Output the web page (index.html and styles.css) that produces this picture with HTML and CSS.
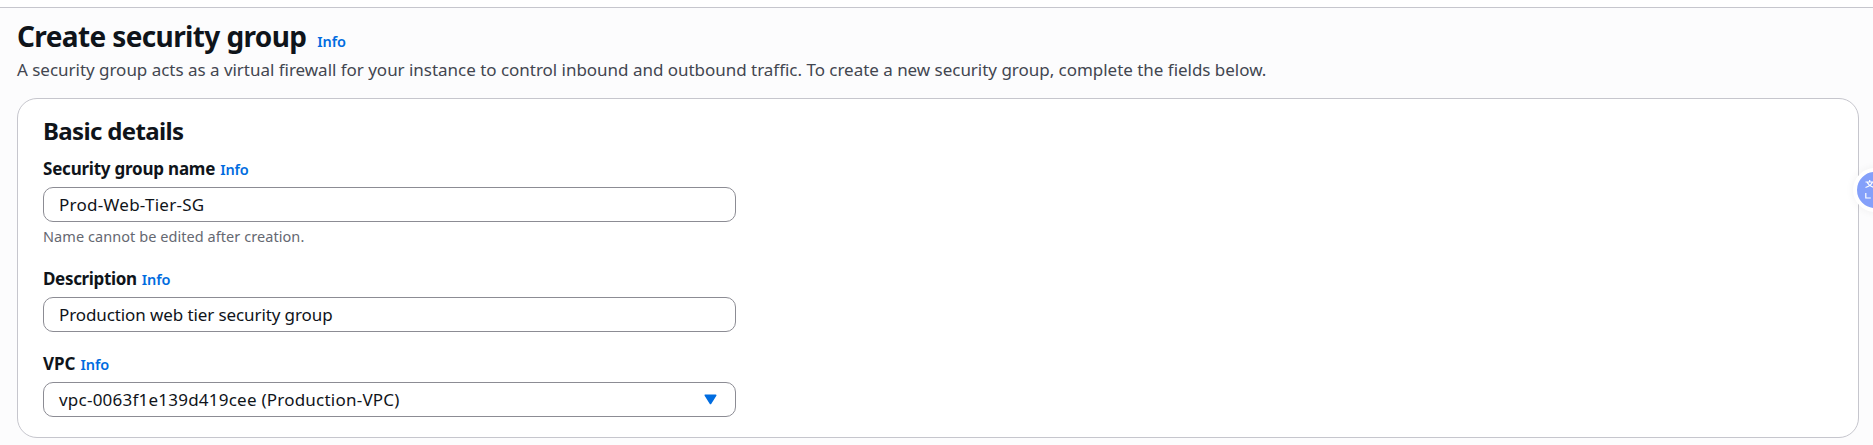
FILE: index.html
```html
<!DOCTYPE html>
<html lang="en">
<head>
<meta charset="utf-8">
<title>Create security group</title>
<link rel="stylesheet" href="styles.css">
</head>
<body>
<div class="topbar"></div>
<main class="page">
  <header class="page-header">
    <h1 class="page-title">Create security group</h1>
    <a class="info">Info</a>
  </header>
  <p class="page-description">A security group acts as a virtual firewall for your instance to control inbound and outbound traffic. To create a new security group, complete the fields below.</p>
  <section class="card">
    <h2 class="card-title">Basic details</h2>
    <div class="field">
      <div class="label-row"><span class="label label-name">Security group name</span><a class="info">Info</a></div>
      <div class="control"><span class="value-name">Prod-Web-Tier-SG</span></div>
      <div class="hint">Name cannot be edited after creation.</div>
    </div>
    <div class="field">
      <div class="label-row"><span class="label label-description">Description</span><a class="info">Info</a></div>
      <div class="control"><span class="value-description">Production web tier security group</span></div>
    </div>
    <div class="field">
      <div class="label-row"><span class="label label-vpc">VPC</span><a class="info">Info</a></div>
      <div class="control select"><span class="value-vpc">vpc-0063f1e139d419cee (Production-VPC)</span>
        <svg class="caret" width="13" height="11" viewBox="0 0 13 11"><path d="M1.300 1.300h10.400L6.500 9.500z" fill="#006ce0" stroke="#006ce0" stroke-width="1.600" stroke-linejoin="round"/></svg>
      </div>
    </div>
  </section>
</main>
<div class="translate">
  <svg width="18" height="20" viewBox="0 0 18 20" fill="none" stroke="#fff" stroke-width="1.200"><path d="M.5 2H9M4.700 0V2M2 2Q4 6 9 7.500M7.500 2Q6 6 .5 7.500M.8 13v5h5"/></svg>
</div>
</body>
</html>
```
FILE: styles.css
```css
* { box-sizing: border-box; }
body {
  margin: 0;
  height: 445px;
  overflow: hidden;
  position: relative;
  background: #fcfcfd;
  color: #0f141a;
  font-family: "Noto Sans", "Open Sans", sans-serif;
  font-size: 17px;
}
h1, h2, p { margin: 0; }
.topbar { height: 8px; background: #fff; border-bottom: 1px solid #c6c6cd; }
.page { padding: 10px 14px 0 17px; }
.page-header { display: flex; align-items: baseline; gap: 11px; height: 36px; }
.page-title { font-size: 28px; line-height: 36px; font-weight: 700; letter-spacing: -0.62px; white-space: nowrap; }
.info { color: #006ce0; font-size: 14.5px; font-weight: 600; letter-spacing: -0.1px; }
.page-description { margin-top: 4px; line-height: 24px; color: #424650; white-space: nowrap; letter-spacing: -0.025px; }
.card {
  margin-top: 16px;
  height: 340px;
  padding: 17px 25px 19px;
  background: #fff;
  border: 1px solid #c6c6cd;
  border-radius: 20px;
  display: flex;
  flex-direction: column;
}
.card-title { font-size: 24px; line-height: 30px; font-weight: 700; letter-spacing: -0.65px; }
.field { width: 693px; margin-top: 20px; }
.card-title + .field { margin-top: 11px; }
.label-row { display: flex; align-items: baseline; gap: 5px; height: 24px; line-height: 24px; margin-bottom: 6px; }
.label { font-weight: 700; }
.label-name { letter-spacing: -0.22px; }
.label-description { letter-spacing: -0.33px; }
.label-vpc { letter-spacing: 0; }
.control {
  height: 35px;
  padding: 0 18px 0 15px;
  border: 1px solid #8c8c94;
  border-radius: 10px;
  display: flex;
  align-items: center;
  justify-content: space-between;
}
.value-name { letter-spacing: 0.27px; }
.value-description { letter-spacing: -0.1px; }
.value-vpc { letter-spacing: 0.23px; }
.hint { margin-top: 4px; height: 21px; line-height: 21px; font-size: 14.5px; letter-spacing: 0.06px; color: #656871; }
.translate {
  position: absolute;
  left: 1853px;
  top: 168px;
  width: 44px;
  height: 44px;
  padding: 8px 0 0 8px;
  border: 4px solid #fff;
  border-radius: 50%;
  background: #84a0fa;
  box-shadow: 0 0 8px rgba(0, 0, 0, 0.06);
}
.translate svg { display: block; }
```
